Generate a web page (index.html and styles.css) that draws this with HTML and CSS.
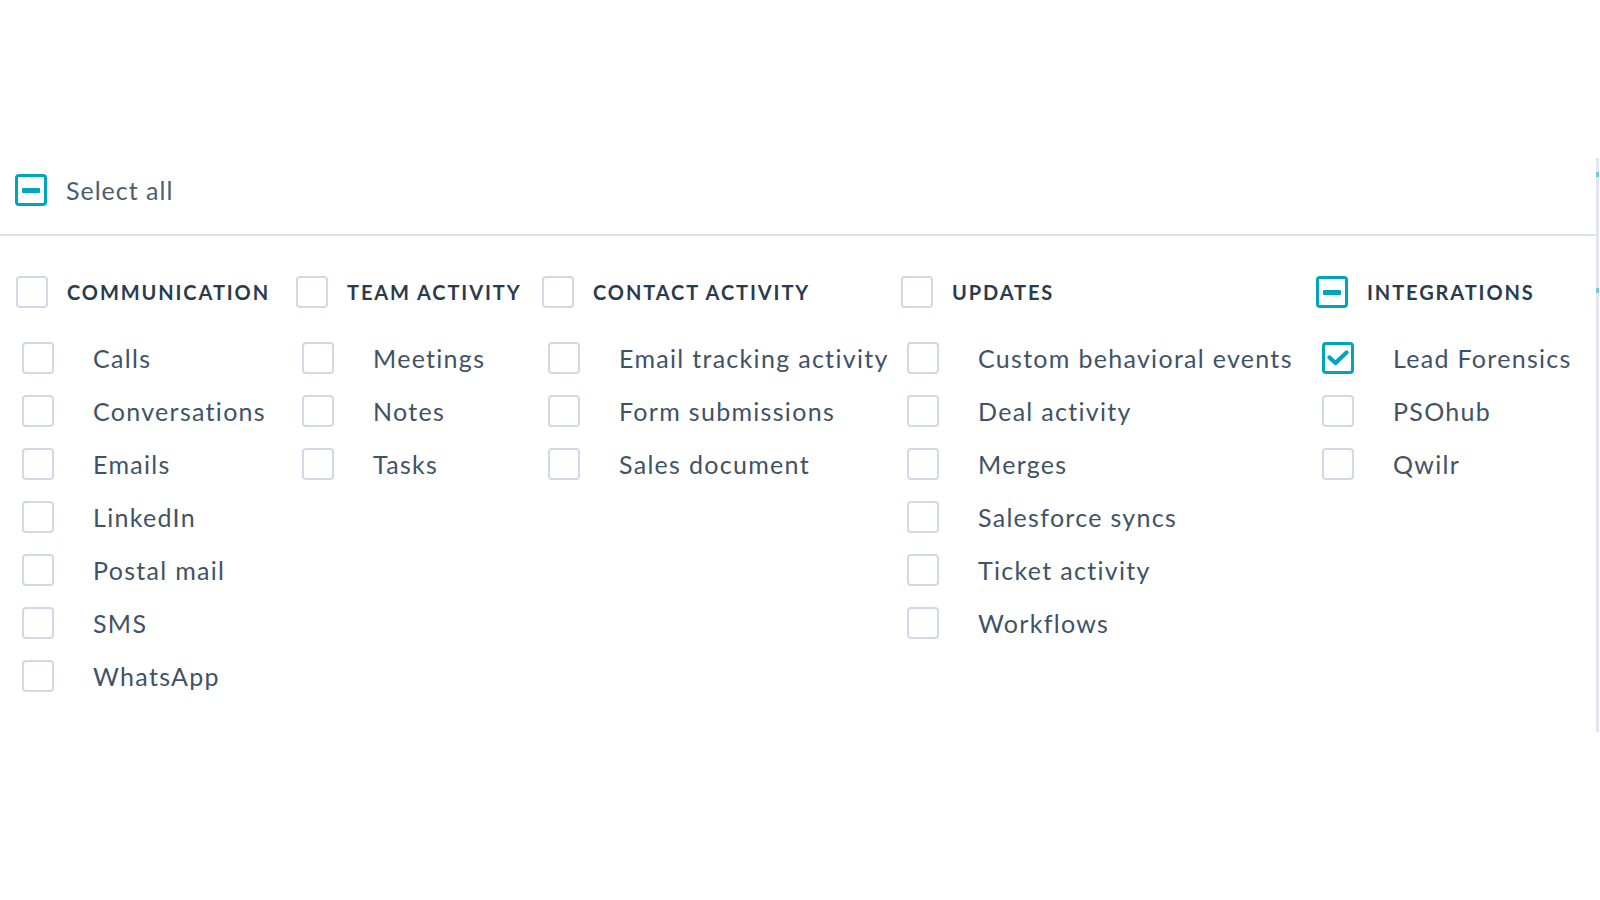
FILE: index.html
```html
<!DOCTYPE html>
<html lang="en">
<head>
  <meta charset="UTF-8">
  <meta name="viewport" content="width=device-width, initial-scale=1.0">
  <title>Activity filters</title>
  <link rel="stylesheet" href="styles.css">
</head>
<body>
  <div class="panel">
    <span class="edge-mark edge-mark--top"></span>
    <span class="edge-mark edge-mark--mid"></span>

    <div class="select-all">
      <span class="box box--on"><span class="dash"></span></span>
      <span class="select-label">Select all</span>
    </div>

    <div class="groups">
      <div class="group">
        <div class="group-head"><span class="box"></span><span class="group-title">COMMUNICATION</span></div>
        <ul class="items">
          <li><span class="box"></span>Calls</li>
          <li><span class="box"></span>Conversations</li>
          <li><span class="box"></span>Emails</li>
          <li><span class="box"></span>LinkedIn</li>
          <li><span class="box"></span>Postal mail</li>
          <li><span class="box"></span>SMS</li>
          <li><span class="box"></span>WhatsApp</li>
        </ul>
      </div>

      <div class="group">
        <div class="group-head"><span class="box"></span><span class="group-title">TEAM ACTIVITY</span></div>
        <ul class="items">
          <li><span class="box"></span>Meetings</li>
          <li><span class="box"></span>Notes</li>
          <li><span class="box"></span>Tasks</li>
        </ul>
      </div>

      <div class="group">
        <div class="group-head"><span class="box"></span><span class="group-title">CONTACT ACTIVITY</span></div>
        <ul class="items">
          <li><span class="box"></span>Email tracking activity</li>
          <li><span class="box"></span>Form submissions</li>
          <li><span class="box"></span>Sales document</li>
        </ul>
      </div>

      <div class="group">
        <div class="group-head"><span class="box"></span><span class="group-title">UPDATES</span></div>
        <ul class="items">
          <li><span class="box"></span>Custom behavioral events</li>
          <li><span class="box"></span>Deal activity</li>
          <li><span class="box"></span>Merges</li>
          <li><span class="box"></span>Salesforce syncs</li>
          <li><span class="box"></span>Ticket activity</li>
          <li><span class="box"></span>Workflows</li>
        </ul>
      </div>

      <div class="group">
        <div class="group-head"><span class="box box--on"><span class="dash"></span></span><span class="group-title">INTEGRATIONS</span></div>
        <ul class="items">
          <li>
            <span class="box box--on">
              <svg width="22" height="16" viewBox="0 0 22 16"><polyline points="2.5,7.5 8.5,13 19.5,2.5" fill="none" stroke="#00a4bd" stroke-width="4.2" stroke-linecap="round" stroke-linejoin="round"/></svg>
            </span>Lead Forensics
          </li>
          <li><span class="box"></span>PSOhub</li>
          <li><span class="box"></span>Qwilr</li>
        </ul>
      </div>
    </div>
  </div>
</body>
</html>
```

FILE: styles.css
```css
body {
  margin: 0;
  background: #fff;
  font-family: Lato, "Noto Sans", sans-serif;
  color: #3f5366;
  overflow: hidden;
}

.panel {
  position: relative;
  margin-top: 158px;
  width: 1596px;
  height: 574px;
  border-right: 3px solid #e1e6ee;
}

/* little teal marks on the panel edge */
.edge-mark {
  position: absolute;
  right: -3px;
  width: 3px;
  height: 5px;
  background: #7fc6d4;
}
.edge-mark--top { top: 14px; }
.edge-mark--mid { top: 130px; }

.select-all {
  display: flex;
  align-items: center;
  gap: 19px;
  padding: 16px 0 28px 15px;
  border-bottom: 2px solid #dbe2ea;
}

.select-label {
  font-size: 25px;
  letter-spacing: 1px;
  color: #4b5e70;
}

/* checkboxes */
.box {
  flex: none;
  box-sizing: border-box;
  width: 32px;
  height: 32px;
  border: 2px solid #cfdae6;
  border-radius: 4px;
  background: #fff;
  display: inline-flex;
  align-items: center;
  justify-content: center;
}

.box--on {
  border: 3px solid #00a4bd;
}

.dash {
  width: 18px;
  height: 5px;
  border-radius: 1px;
  background: #00a4bd;
}

.groups {
  display: grid;
  grid-template-columns: 280px 246px 359px 415px 1fr;
  padding: 40px 0 0 16px;
}

.group-head {
  display: flex;
  align-items: center;
  gap: 19px;
  height: 32px;
}

.group-title {
  font-size: 20px;
  font-weight: 700;
  letter-spacing: 1.9px;
  color: #2a3b4d;
  white-space: nowrap;
}

.items {
  list-style: none;
  margin: 23px 0 0;
  padding: 0;
}

.items li {
  display: flex;
  align-items: center;
  height: 53px;
  font-size: 25px;
  letter-spacing: 1.3px;
  white-space: nowrap;
}

.items .box {
  margin: 0 39px 0 6px;
}
```
